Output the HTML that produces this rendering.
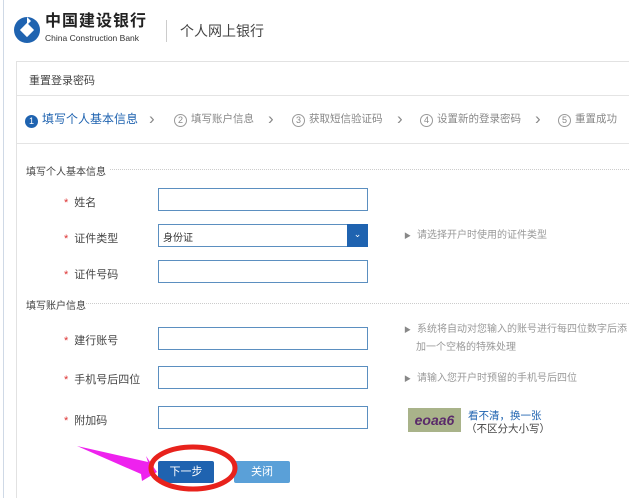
<!DOCTYPE html>
<html><head><meta charset="utf-8"><style>
*{margin:0;padding:0;box-sizing:border-box}
body{width:629px;height:498px;background:#fff;font-family:"Liberation Sans","Noto Sans CJK SC",sans-serif;position:relative;overflow:hidden;color:#333}
.a{position:absolute;white-space:nowrap}
.inp{position:absolute;left:158px;width:210px;height:23px;border:1px solid #5b8fc0;background:#fff}
.lab{position:absolute;left:64px;font-size:11px;color:#444}
.lab b{color:#d33;font-weight:normal;margin-right:6px}
.tip{position:absolute;font-size:10px;color:#999;line-height:17px}
.tip i{font-style:normal;font-size:7px;color:#888;margin-right:6px}
.step{position:absolute;top:111px;font-size:10.5px;color:#888}
.ch{position:absolute;top:109px;font-size:17px;color:#888;line-height:20px}
.c{display:inline-block;width:13px;height:13px;border:1px solid #999;border-radius:50%;font-size:9px;text-align:center;line-height:11px;margin-right:4px;vertical-align:-1px}
</style></head><body>
<div class="a" style="left:3px;top:0;width:1px;height:498px;background:#cfd9e6"></div>
<svg class="a" style="left:13px;top:16px" width="28" height="28" viewBox="0 0 28 28"><circle cx="14" cy="14" r="13" fill="#1f63b0"/><rect x="9" y="9" width="10" height="10" fill="#fff" transform="rotate(45 14 14)"/><path d="M14 1 L18 5 L14 9 Z" fill="#fff"/></svg>
<div class="a" style="left:45px;top:12px;font-size:16px;line-height:20px;font-weight:bold;color:#222;letter-spacing:1px">中国建设银行</div>
<div class="a" style="left:45px;top:33px;font-size:8.5px;line-height:10px;color:#333">China Construction Bank</div>
<div class="a" style="left:166px;top:20px;width:1px;height:22px;background:#ccc"></div>
<div class="a" style="left:180px;top:21px;font-size:14px;color:#444">个人网上银行</div>
<div class="a" style="left:16px;top:61px;width:613px;height:437px;border:1px solid #e2e2e2;border-right:none;border-bottom:none"></div>
<div class="a" style="left:29px;top:72px;font-size:11px;color:#444">重置登录密码</div>
<div class="a" style="left:17px;top:95px;width:612px;height:1px;background:#e4e4e4"></div>
<div class="a" style="left:17px;top:143px;width:612px;height:1px;background:#e4e4e4"></div>
<div class="step" style="left:25px;color:#1f63b0;font-size:12px;top:110px"><span class="c" style="background:#1f63b0;border-color:#1f63b0;color:#fff">1</span>填写个人基本信息</div>
<div class="ch" style="left:149px">›</div>
<div class="step" style="left:174px"><span class="c">2</span>填写账户信息</div>
<div class="ch" style="left:268px">›</div>
<div class="step" style="left:292px"><span class="c">3</span>获取短信验证码</div>
<div class="ch" style="left:397px">›</div>
<div class="step" style="left:420px"><span class="c">4</span>设置新的登录密码</div>
<div class="ch" style="left:535px">›</div>
<div class="step" style="left:558px"><span class="c">5</span>重置成功</div>
<div class="a" style="left:26px;top:163px;font-size:10px;color:#444">填写个人基本信息</div>
<div class="a" style="left:110px;top:169px;width:519px;border-top:1px dotted #ccc"></div>
<div class="lab" style="top:194px"><b>*</b>姓名</div><div class="inp" style="top:188px"></div>
<div class="lab" style="top:230px"><b>*</b>证件类型</div>
<div class="inp" style="top:224px;font-size:10px;padding:4px 4px;color:#333">身份证<div class="a" style="right:-1px;top:-1px;width:21px;height:23px;background:#1f63b0;color:#fff;font-size:9px;text-align:center;line-height:21px">⌄</div></div>
<div class="tip a" style="left:404px;top:227px"><i>▶</i>请选择开户时使用的证件类型</div>
<div class="lab" style="top:266px"><b>*</b>证件号码</div><div class="inp" style="top:260px"></div>
<div class="a" style="left:26px;top:297px;font-size:10px;color:#444">填写账户信息</div>
<div class="a" style="left:86px;top:303px;width:543px;border-top:1px dotted #ccc"></div>
<div class="lab" style="top:332px"><b>*</b>建行账号</div><div class="inp" style="top:327px"></div>
<div class="tip a" style="left:404px;top:321px"><i>▶</i>系统将自动对您输入的账号进行每四位数字后添<br><span style="margin-left:12px">加一个空格的特殊处理</span></div>
<div class="lab" style="top:371px"><b>*</b>手机号后四位</div><div class="inp" style="top:366px"></div>
<div class="tip a" style="left:404px;top:370px"><i>▶</i>请输入您开户时预留的手机号后四位</div>
<div class="lab" style="top:412px"><b>*</b>附加码</div><div class="inp" style="top:406px"></div>
<div class="a" style="left:408px;top:408px;width:53px;height:24px;background:#a9b38a;color:#5a2a6a;font-size:14px;font-weight:bold;text-align:center;line-height:24px;font-style:italic">eoaa6</div>
<div class="a" style="left:468px;top:408px;font-size:10.5px;color:#1f63b0">看不清，换一张</div>
<div class="a" style="left:466px;top:421px;font-size:10.5px;color:#444">（不区分大小写）</div>
<div class="a" style="left:158px;top:461px;width:56px;height:22px;background:#1f63b0;border-radius:2px;color:#fff;font-size:11px;text-align:center;line-height:22px">下一步</div>
<div class="a" style="left:234px;top:461px;width:56px;height:22px;background:#5aa0d8;border-radius:2px;color:#fff;font-size:11px;text-align:center;line-height:22px">关闭</div>
<svg class="a" style="left:0;top:0" width="629" height="498">
<polygon points="77,446 148,462 146,456 157,472 142,481 141,474" fill="#ee22ee"/>
<ellipse cx="193" cy="468" rx="42" ry="21" fill="none" stroke="#e8221c" stroke-width="5"/>
</svg>
</body></html>
